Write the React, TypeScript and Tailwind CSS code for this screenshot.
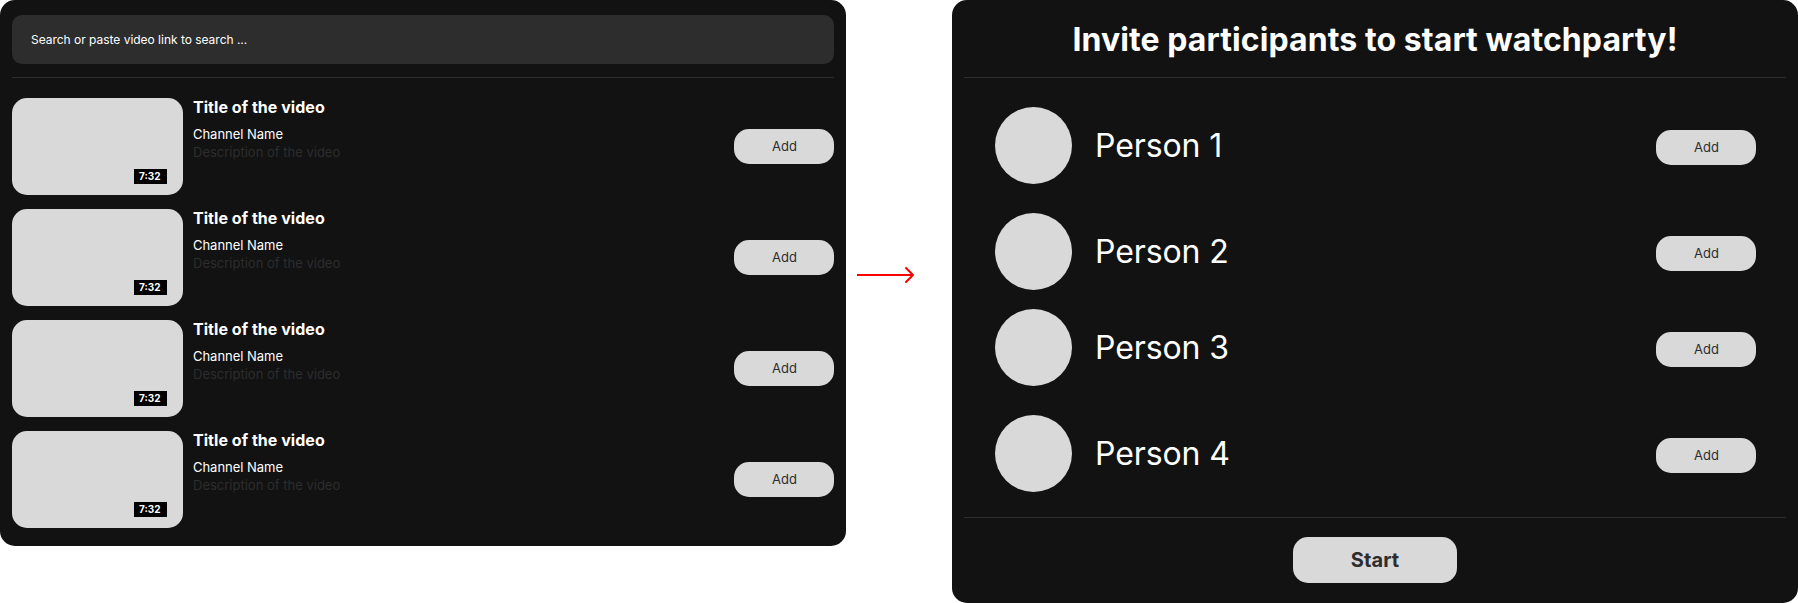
const videos = [1, 2, 3, 4];

const people = [
  { name: 'Person 1', spacing: 'mt-[29px]' },
  { name: 'Person 2', spacing: 'mt-[29px]' },
  { name: 'Person 3', spacing: 'mt-[19px]' },
  { name: 'Person 4', spacing: 'mt-[29px]' },
];

function AddButton() {
  return (
    <button className="h-[35px] w-[100px] shrink-0 rounded-[15px] bg-[#d9d9d9] pb-px pl-px text-[13px] leading-4 text-[#2d2d2d]">
      Add
    </button>
  );
}

function VideoRow() {
  return (
    <li className="flex h-[97px]">
      <div className="flex w-[171px] shrink-0 items-end justify-end rounded-[15px] bg-[#d9d9d9] pr-4 pb-[11px]">
        <span className="h-[15px] w-[33px] bg-black pl-[5px] text-[10px] leading-[14px] font-bold text-white">
          7:32
        </span>
      </div>
      <div className="flex-1 pl-[10px]">
        <h2 className="text-base leading-[19px] font-bold tracking-[0.04px] text-white">Title of the video</h2>
        <p className="mt-[9px] text-[13px] leading-4 tracking-[-0.03px] text-white">Channel Name</p>
        <p className="mt-[2px] text-[13px] leading-4 text-[#2d2d2d]">Description of the video</p>
      </div>
      <div className="pt-[31px]">
        <AddButton />
      </div>
    </li>
  );
}

export default function App() {
  return (
    <main className="flex h-[603px] w-[1798px] items-start bg-white font-['Inter',sans-serif]">
      <section className="h-[546px] w-[846px] shrink-0 rounded-[15px] bg-[#121212] px-3 pt-[15px]">
        <input
          className="block h-[49px] w-full rounded-[10px] bg-[#2d2d2d] px-[19px] text-xs tracking-[-0.02px] text-white placeholder:text-white"
          placeholder="Search or paste video link to search ..."
        />
        <hr className="mt-[13px] border-[#2d2d2d]" />
        <ul className="mt-5 flex flex-col gap-[14px]">
          {videos.map((id) => (
            <VideoRow key={id} />
          ))}
        </ul>
      </section>

      <div className="flex w-[106px] shrink-0 pt-[265px] pl-[11px]">
        <svg width="60" height="20" viewBox="0 0 60 20" fill="none" stroke="#ff0000" strokeWidth="2">
          <path d="M0 10H56" />
          <path d="M49 3L56 10L49 17" strokeLinecap="round" strokeLinejoin="round" />
        </svg>
      </div>

      <section className="h-[603px] w-[846px] shrink-0 rounded-[15px] bg-[#121212] px-3 pt-5">
        <h1 className="text-center text-[32px] leading-[39px] font-bold tracking-[0.08px] text-white">
          Invite participants to start watchparty!
        </h1>
        <hr className="mt-[18px] border-[#2d2d2d]" />
        <ul className="pr-[30px] pl-[31px]">
          {people.map(({ name, spacing }) => (
            <li key={name} className={`flex h-[77px] items-center ${spacing}`}>
              <span className="size-[77px] shrink-0 rounded-full bg-[#d9d9d9]" />
              <span className="flex-1 pl-[23px] text-[32px] leading-[39px] tracking-[-0.1px] text-white">{name}</span>
              <div className="pt-[4px]">
                <AddButton />
              </div>
            </li>
          ))}
        </ul>
        <hr className="mt-[25px] border-[#2d2d2d]" />
        <div className="mt-[19px] flex justify-center">
          <button className="h-[46px] w-[164px] rounded-[15px] bg-[#d9d9d9] text-xl leading-6 font-bold tracking-[0.1px] text-[#2d2d2d]">
            Start
          </button>
        </div>
      </section>
    </main>
  );
}
